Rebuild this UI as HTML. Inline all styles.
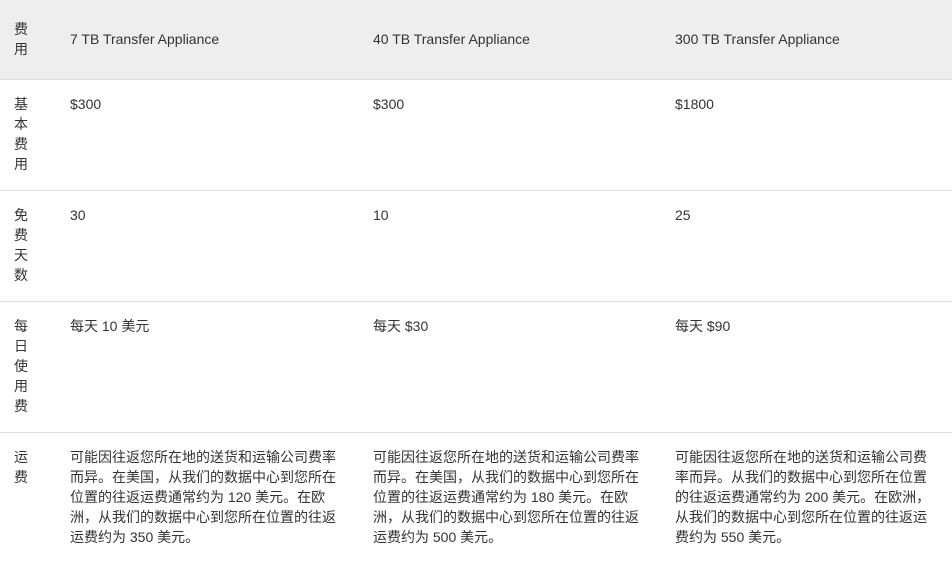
<!DOCTYPE html>
<html><head><meta charset="utf-8"><style>
html,body{margin:0;padding:0;background:#fff;width:952px;height:563px;overflow:hidden}
table{border-collapse:collapse;table-layout:fixed;width:952px;font-family:"Liberation Sans","Noto Sans CJK SC",sans-serif;font-size:14px;line-height:20px;color:#333}
th,td{text-align:left;vertical-align:top;padding:14px 0 16px 14px;font-weight:normal;word-break:break-all}
th{background:#eee;height:39px;vertical-align:middle;padding-top:19px;padding-bottom:20px}
td{border-top:1px solid #ddd}
.c1{width:16px}.c2{width:272px}.c3{width:272px}.c4{width:258px}
</style></head><body>
<table>
<colgroup><col style="width:56px"><col style="width:303px"><col style="width:302px"><col style="width:291px"></colgroup>
<tr><th><div class="c1">费用</div></th><th><div class="c2">7 TB Transfer Appliance</div></th><th><div class="c3">40 TB Transfer Appliance</div></th><th><div class="c4">300 TB Transfer Appliance</div></th></tr>
<tr><td><div class="c1">基本费用</div></td><td>$300</td><td>$300</td><td>$1800</td></tr>
<tr><td><div class="c1">免费天数</div></td><td>30</td><td>10</td><td>25</td></tr>
<tr><td><div class="c1">每日使用费</div></td><td>每天 10 美元</td><td>每天 $30</td><td>每天 $90</td></tr>
<tr><td><div class="c1">运费</div></td><td><div class="c2">可能因往返您所在地的送货和运输公司费率而异。在美国，从我们的数据中心到您所在位置的往返运费通常约为 120 美元。在欧洲，从我们的数据中心到您所在位置的往返运费约为 350 美元。</div></td><td><div class="c3">可能因往返您所在地的送货和运输公司费率而异。在美国，从我们的数据中心到您所在位置的往返运费通常约为 180 美元。在欧洲，从我们的数据中心到您所在位置的往返运费约为 500 美元。</div></td><td><div class="c4">可能因往返您所在地的送货和运输公司费率而异。从我们的数据中心到您所在位置的往返运费通常约为 200 美元。在欧洲，从我们的数据中心到您所在位置的往返运费约为 550 美元。</div></td></tr>
</table>
</body></html>
